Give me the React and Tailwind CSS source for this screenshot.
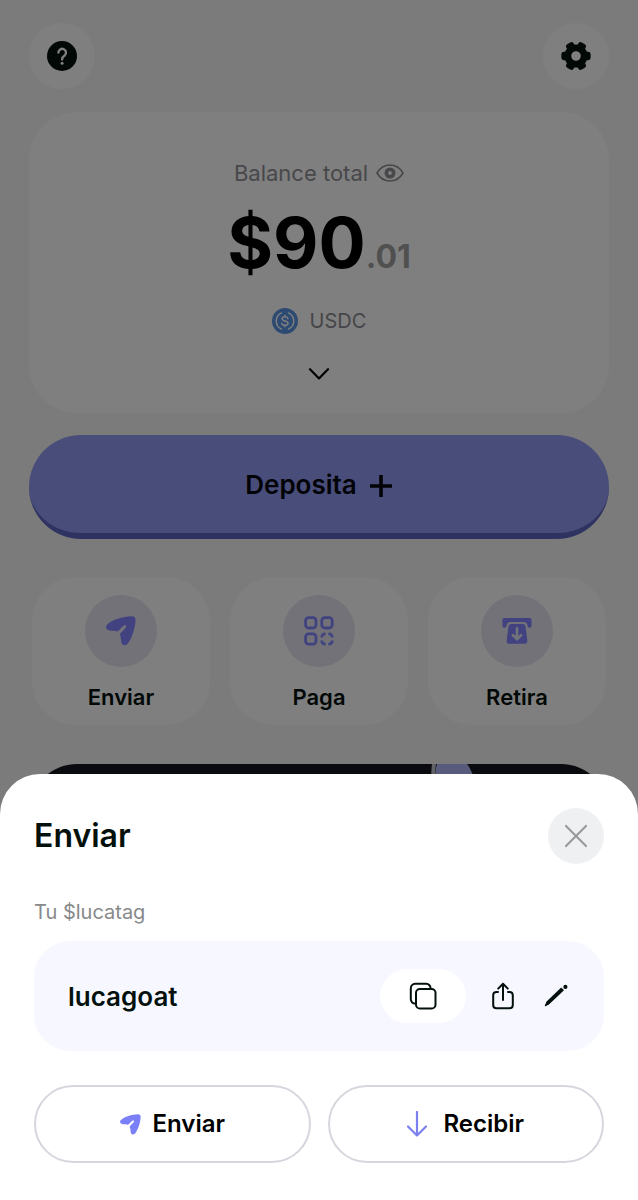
const SendIcon = ({ className }) => (
  <svg viewBox="0 0 30 30" className={className} fill="currentColor" aria-hidden="true">
    <path d="M1.2 8.6C6 3.6 17 .4 25.6.2C28.4.1 29.6 1.4 29.5 4.2C29.2 12.4 25.6 23 21.6 27.8C19.4 30.4 16 29.6 15.3 26.2C14.8 23.4 15.2 21 13.8 18.6C14.2 16.4 20 12.4 20.2 10.4C20 9 18.8 9.2 17.6 9.8C15.6 11 13.4 14.6 11.4 15.4C9 14.8 6.6 15.2 3.8 14.6C.2 13.8-1 11 1.2 8.6Z" />
  </svg>
);

const PayIcon = ({ className }) => (
  <svg viewBox="0 0 30 30" className={className} fill="none" stroke="currentColor" strokeWidth="2.8" aria-hidden="true">
    <rect x="1.6" y="1.6" width="10.4" height="10.4" rx="3" />
    <rect x="17.8" y="1.6" width="10.4" height="10.4" rx="3" />
    <rect x="1.6" y="17.8" width="10.4" height="10.4" rx="3" />
    <path d="M17.8 21.6V21a3.2 3.2 0 0 1 3.2-3.2h.6M24.4 17.8h.6a3.2 3.2 0 0 1 3.2 3.2v.6M28.2 24.4v.6a3.2 3.2 0 0 1-3.2 3.2h-.6M21.6 28.2H21a3.2 3.2 0 0 1-3.2-3.2v-.6" />
  </svg>
);

const WithdrawIcon = ({ className }) => (
  <svg viewBox="0 0 32 30" className={className} aria-hidden="true">
    <path fill="currentColor" d="M2.500 1H29.500Q31.500 1 31.500 3V9.500Q31.500 11.500 29.800 11.500H28.800Q27.400 11.200 27.200 9Q26.600 5.400 23 5.400H9Q5.400 5.400 4.800 9Q4.600 11.200 3.200 11.500H2.200Q.5 11.500.5 9.500V3Q.5 1 2.500 1Z" />
    <path fill="currentColor" d="M10 7.4H22Q24.6 7.4 25 10L27 25Q27.3 28.6 24.4 28.6H7.6Q4.7 28.6 5 25L7 10Q7.4 7.4 10 7.4Z" />
    <path className="stroke-[#e6e7f4]" fill="none" strokeWidth="2.8" strokeLinecap="round" strokeLinejoin="round" d="M16 12V23M11.6 19.4L16 23.8L20.4 19.4" />
  </svg>
);

const HelpIcon = () => (
  <svg viewBox="0 0 30 30" className="size-[30px]" aria-hidden="true">
    <circle cx="15" cy="15" r="15" className="fill-[#04100c]" />
    <path d="M11.4 11.6a3.8 3.8 0 1 1 6.2 3c-1.5 1-2.5 1.7-2.5 3.8" fill="none" className="stroke-white" strokeWidth="2.4" strokeLinecap="round" />
    <circle cx="15.1" cy="22.2" r="1.5" className="fill-white" />
  </svg>
);

const GearIcon = () => (
  <svg viewBox="0 0 30 30" className="size-[30px] text-[#04100c]" aria-hidden="true">
    <circle cx="15" cy="15" r="8.2" fill="none" stroke="currentColor" strokeWidth="6.8" />
    {[0, 60, 120, 180, 240, 300].map((a) => (
      <rect key={a} x="21" y="10.8" width="8.6" height="8.4" rx="2.4" fill="currentColor" transform={`rotate(${a} 15 15)`} />
    ))}
  </svg>
);

const EyeIcon = () => (
  <svg viewBox="0 0 28 20" className="h-5 w-7" fill="none" stroke="currentColor" strokeWidth="1.6" aria-hidden="true">
    <path d="M1 10C4 4.8 8.5 2 14 2S24 4.8 27 10C24 15.2 19.5 18 14 18S4 15.2 1 10Z" strokeLinejoin="round" />
    <circle cx="14" cy="10" r="3.7" strokeWidth="3.6" />
  </svg>
);

const UsdcIcon = () => (
  <svg viewBox="0 0 26 26" className="size-[26px]" fill="none" aria-hidden="true">
    <circle cx="13" cy="13" r="13" className="fill-[#5a94e4]" />
    <g className="stroke-white" strokeWidth="1.4" strokeLinecap="round">
      <path d="M9.6 4.9a8.8 8.8 0 0 0 0 16.2M16.4 4.9a8.8 8.8 0 0 1 0 16.2" />
      <path d="M15.9 10.7c-.2-1.4-1.3-2-2.9-2s-2.9.7-2.9 2c0 3 6 1.5 6 4.5 0 1.4-1.3 2.1-3.1 2.1s-3-.7-3.2-2.2M13 7.2v1.5M13 17.3v1.5" />
    </g>
  </svg>
);

const CopyIcon = () => (
  <svg viewBox="0 0 28 28" className="size-7" fill="none" stroke="currentColor" strokeWidth="2" aria-hidden="true">
    <rect x="7" y="7" width="19.5" height="19.5" rx="3.8" />
    <path d="M6.5 21.6A4.3 4.3 0 0 1 1.8 17.3V6.2A4.3 4.3 0 0 1 6.1 1.8H17.2A4.3 4.3 0 0 1 21.5 6.6" />
  </svg>
);

const ShareIcon = () => (
  <svg viewBox="0 0 22 28" className="h-7 w-[22px]" fill="none" stroke="currentColor" strokeWidth="2" strokeLinecap="round" strokeLinejoin="round" aria-hidden="true">
    <path d="M6 10H4.5Q1.2 10 1.2 13.3V23Q1.2 26.300 4.5 26.300H17.5Q20.8 26.300 20.8 23V13.3Q20.8 10 17.5 10H16" />
    <path d="M11 18V2M6.2 6.6L11 1.8L15.8 6.6" />
  </svg>
);

const PencilIcon = () => (
  <svg viewBox="0 0 24 24" className="size-6" fill="currentColor" aria-hidden="true">
    <path d="M17.2 3.4L20 6.2L5.2 20.2L1.6 22.3Q.5 22.5.8 21.5L2.6 17.6Z" />
    <circle cx="21.4" cy="2.900" r="2.1" />
  </svg>
);

const ACTIONS = [
  { label: "Enviar", Icon: SendIcon },
  { label: "Paga", Icon: PayIcon },
  { label: "Retira", Icon: WithdrawIcon },
];

const RoundButton = ({ label, children }) => (
  <button type="button" aria-label={label} className="flex size-[66px] items-center justify-center rounded-full bg-white">
    {children}
  </button>
);

const Home = () => (
  <main className="px-[29px] pt-[23px]">
    <header className="flex justify-between">
      <RoundButton label="Ayuda"><HelpIcon /></RoundButton>
      <RoundButton label="Ajustes"><GearIcon /></RoundButton>
    </header>

    {/* Balance */}
    <section className="mt-[23px] flex flex-col items-center rounded-[48px] bg-white pt-[47px] pb-[33px]">
      <div className="flex items-center gap-2 text-[#909096]">
        <span className="text-[22px] leading-7">Balance total</span>
        <button type="button" aria-label="Ocultar balance"><EyeIcon /></button>
      </div>
      <div className="mt-4 flex h-20 items-baseline leading-[80px]">
        <span className="text-[70px] font-bold text-black">$90</span>
        <span className="text-[32px] font-bold text-[#a0a0a0]">.01</span>
      </div>
      <div className="mt-[25px] flex h-[26px] items-center gap-3">
        <UsdcIcon />
        <span className="text-[20px] text-[#8c8c90]">USDC</span>
      </div>
      <button type="button" aria-label="Ver más" className="mt-[34px]">
        <svg viewBox="0 0 22 12" className="h-3 w-[22px]" fill="none" stroke="#000" strokeWidth="2.2" strokeLinecap="round" strokeLinejoin="round">
          <path d="M2 1.2L11 10.4L20 1.2" />
        </svg>
      </button>
    </section>

    <button type="button" className="mt-[22px] flex h-[104px] w-full items-center justify-center gap-3 rounded-full border-b-6 border-[#5f66c4] bg-[#929af4] text-[26px] font-semibold text-[#04060c]">
      Deposita
      <svg viewBox="0 0 24 24" className="mt-1 size-6" stroke="currentColor" strokeWidth="3.6" aria-hidden="true">
        <path d="M12 1V23M1 12H23" />
      </svg>
    </button>

    {/* Quick actions */}
    <nav className="mt-[38px] grid grid-cols-3 gap-5 px-[3px]">
      {ACTIONS.map(({ label, Icon }) => (
        <button key={label} type="button" className="flex h-[148px] flex-col items-center rounded-[44px] bg-white pt-[18px]">
          <span className="flex size-[72px] items-center justify-center rounded-full bg-[#e4e5f0] text-[#8284ff]">
            <Icon className="size-[30px]" />
          </span>
          <span className="mt-4 text-[22px] leading-7 font-semibold text-[#04100c]">{label}</span>
        </button>
      ))}
    </nav>

    {/* Promo banner */}
    <section className="mt-[39px] flex h-48 justify-end overflow-hidden rounded-[48px] bg-[#14161c] pr-[128px]">
      <svg viewBox="0 0 50 60" className="h-[60px] w-[50px]" aria-hidden="true">
        <path d="M6 0H36C44 10 48 30 50 60H14C6 40 2 12 6 0Z" className="fill-[#b2b6fa]" />
        <path d="M1 0H5C3 14 6 40 12 60H8C1 40-1 14 1 0Z" className="fill-[#c4c6cc]" />
      </svg>
    </section>
  </main>
);

const SendSheet = () => (
  <section role="dialog" aria-labelledby="sheet-title" className="w-full rounded-t-[40px] bg-white px-[34px] pt-[34px] pb-[37px]">
    <div className="flex items-center justify-between">
      <h2 id="sheet-title" className="text-[32px] font-semibold text-[#04100c]">Enviar</h2>
      <button type="button" aria-label="Cerrar" className="flex size-14 items-center justify-center rounded-full bg-[#eff0f2] text-[#999a9c]">
        <svg viewBox="0 0 24 24" className="size-6" stroke="currentColor" strokeWidth="2.2" strokeLinecap="round">
          <path d="M2 2L22 22M22 2L2 22" />
        </svg>
      </button>
    </div>

    <p className="mt-[34px] text-[20px] leading-7 text-[#88898b]">Tu $lucatag</p>

    <div className="mt-[15px] flex h-[110px] items-center rounded-[36px] bg-[#f6f7ff] pr-9 pl-[34px] text-[#04100c]">
      <span className="mr-auto text-[26px] font-semibold">lucagoat</span>
      <button type="button" aria-label="Copiar" className="flex h-[54px] w-[86px] items-center justify-center rounded-full bg-white">
        <CopyIcon />
      </button>
      <button type="button" aria-label="Compartir" className="ml-[26px]"><ShareIcon /></button>
      <button type="button" aria-label="Editar" className="ml-[30px]"><PencilIcon /></button>
    </div>

    <div className="mt-[34px] grid grid-cols-2 gap-[17px] text-[24px] font-semibold text-black">
      <button type="button" className="flex h-[78px] items-center justify-center gap-3 rounded-full border-2 border-[#d6d7de]">
        <SendIcon className="size-[21px] text-[#7b80f8]" />
        Enviar
      </button>
      <button type="button" className="flex h-[78px] items-center justify-center gap-4 rounded-full border-2 border-[#d6d7de]">
        <svg viewBox="0 0 20 26" className="h-[26px] w-5 text-[#7b80ec]" fill="none" stroke="currentColor" strokeWidth="2.2" strokeLinecap="round" strokeLinejoin="round" aria-hidden="true">
          <path d="M10 1V24.5M1 15.5L10 24.5L19 15.5" />
        </svg>
        Recibir
      </button>
    </div>
  </section>
);

const App = () => (
  <div className="min-h-screen bg-[#f6f6f6] font-['Inter',sans-serif]">
    <Home />
    <div className="fixed inset-0 flex items-end bg-black/50">
      <SendSheet />
    </div>
  </div>
);

export default App;
